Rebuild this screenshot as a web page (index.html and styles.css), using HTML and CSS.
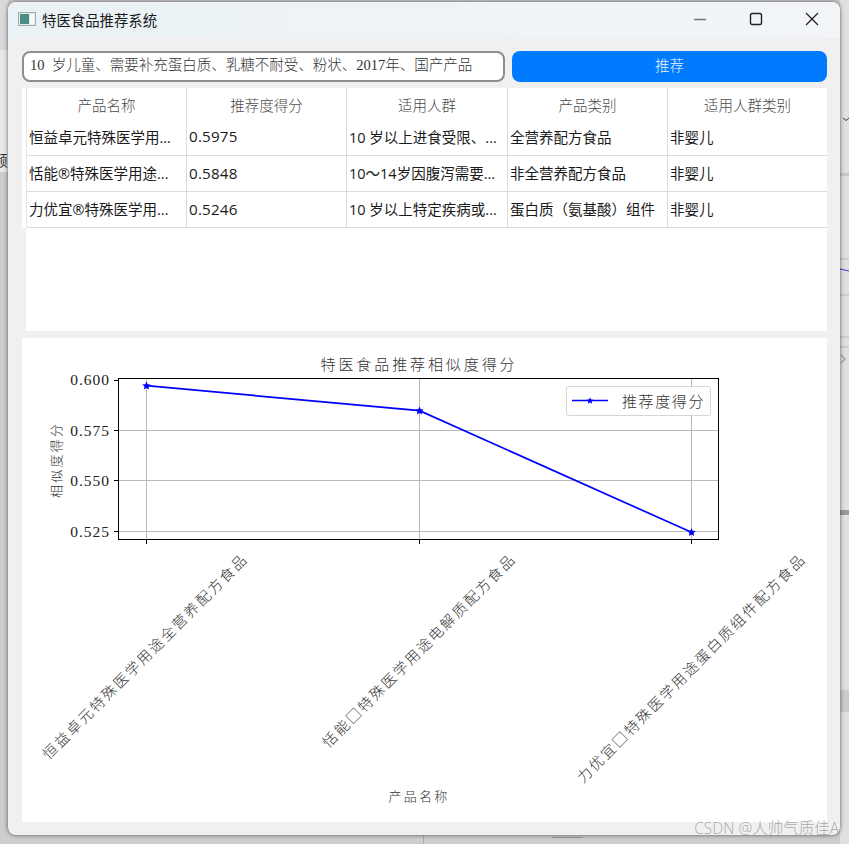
FILE: index.html
```html
<!DOCTYPE html>
<html lang="zh-CN">
<head>
  <meta charset="UTF-8" />
  <title>特医食品推荐系统</title>
  <link rel="stylesheet" href="styles.css">
</head>
<body>
  <!-- bits of the desktop showing around the window -->
  <svg class="desk-left" width="8" height="844" viewBox="0 0 8 844">
    <rect width="8" height="50" fill="#d9d9d9"/>
    <rect y="50" width="8" height="122" fill="#e8e8e8"/>
    <path d="M0 155H8" stroke="#dcdcdc"/>
  </svg>
  <div class="desk-word">频</div>
  <svg class="desk-right" width="9" height="844" viewBox="0 0 9 844">
    <path d="M3 118l3 2.5 3-2.5" fill="none" stroke="#333" stroke-width="1"/>
    <rect y="173" width="9" height="3" fill="#c8c8c8"/>
    <path d="M0 259H9M0 295H9M0 337H9M0 347H9" stroke="#b8b8b8"/>
    <path d="M0 269L9 271" stroke="#3a3ad0" stroke-width="1"/>
    <path d="M1 355l4 4-4 4" fill="none" stroke="#aaa" stroke-width="1.5"/>
    <rect y="510" width="9" height="5" fill="#999"/>
    <rect y="690" width="9" height="22" fill="#cbcbcb"/>
  </svg>
  <svg class="desk-bottom" width="849" height="9" viewBox="0 0 849 9">
    <path d="M423.5 0V9" stroke="#aaa"/>
    <path d="M552 2.5H583" stroke="#999"/>
  </svg>

  <div class="window">
    <header class="titlebar">
      <svg class="app-icon" width="18" height="14" viewBox="0 0 18 14">
        <rect x="0.5" y="0.5" width="17" height="13" fill="#e6eaea" stroke="#a2aaac"/>
        <rect x="2" y="2" width="9" height="10" fill="#468f82"/>
        <rect x="12" y="2" width="4" height="10" fill="#f8f8f8"/>
      </svg>
      <span class="title">特医食品推荐系统</span>
      <div class="win-buttons">
        <svg width="14" height="14" viewBox="0 0 14 14"><path d="M1 7.5H13" stroke="#777" stroke-width="1.4"/></svg>
        <svg width="14" height="14" viewBox="0 0 14 14"><rect x="1.5" y="1.5" width="11" height="11" rx="1.5" fill="none" stroke="#222" stroke-width="1.4"/></svg>
        <svg width="14" height="14" viewBox="0 0 14 14"><path d="M1 1L13 13M13 1L1 13" stroke="#222" stroke-width="1.3"/></svg>
      </div>
    </header>

    <div class="content">
      <div class="search-row">
        <div class="search-input">10  岁儿童、需要补充蛋白质、乳糖不耐受、粉状、2017年、国产产品</div>
        <button class="search-btn">推荐</button>
      </div>

      <div class="table-panel">
        <table class="results">
          <thead>
            <tr><th>产品名称</th><th>推荐度得分</th><th>适用人群</th><th>产品类别</th><th>适用人群类别</th></tr>
          </thead>
          <tbody>
            <tr><td>恒益卓元特殊医学用...</td><td class="num">0.5975</td><td>10 岁以上进食受限、...</td><td>全营养配方食品</td><td>非婴儿</td></tr>
            <tr><td>恬能®特殊医学用途...</td><td class="num">0.5848</td><td>10～14岁因腹泻需要...</td><td>非全营养配方食品</td><td>非婴儿</td></tr>
            <tr><td>力优宜®特殊医学用...</td><td class="num">0.5246</td><td>10 岁以上特定疾病或...</td><td>蛋白质（氨基酸）组件</td><td>非婴儿</td></tr>
          </tbody>
        </table>
      </div>

      <div class="chart-panel">
        <svg class="chart" width="805" height="484" viewBox="0 0 805 484">
          <text class="chart-title" x="397" y="32" text-anchor="middle">特医食品推荐相似度得分</text>

          <g class="grid">
            <path d="M124.5 41V201M397.5 41V201M669.5 41V201"/>
            <path d="M97 92.5H697M97 142.5H697M97 193.5H697"/>
          </g>
          <g class="ticks">
            <path d="M92 42.5H97M92 92.5H97M92 142.5H97M92 193.5H97"/>
            <path d="M124.5 202V206M397.5 202V206M669.5 202V206"/>
          </g>
          <rect class="axes" x="96.5" y="40.5" width="600" height="161"/>

          <text class="tick" x="88" y="47" text-anchor="end">0.600</text>
          <text class="tick" x="88" y="98" text-anchor="end">0.575</text>
          <text class="tick" x="88" y="148" text-anchor="end">0.550</text>
          <text class="tick" x="88" y="199" text-anchor="end">0.525</text>

          <text class="axis-label" transform="translate(39 122) rotate(-90)" text-anchor="middle">相似度得分</text>
          <text class="axis-label" x="397" y="463" text-anchor="middle">产品名称</text>

          <polyline class="line" points="124.5,47.7 397.5,72.7 669.5,194.3"/>
          <g class="marker">
            <path d="M124.5 43.5l1.2 2.7 3 .3-2.2 2 .6 2.9-2.6-1.5-2.6 1.5.6-2.9-2.2-2 3-.3z"/>
            <path d="M397.5 68.5l1.2 2.7 3 .3-2.2 2 .6 2.9-2.6-1.5-2.6 1.5.6-2.9-2.2-2 3-.3z"/>
            <path d="M669.5 190l1.2 2.7 3 .3-2.2 2 .6 2.9-2.6-1.5-2.6 1.5.6-2.9-2.2-2 3-.3z"/>
          </g>

          <rect class="legend" x="544.5" y="48.5" width="144" height="29" rx="2"/>
          <path class="line" d="M550 62.5H586"/>
          <path class="marker" d="M568 59.3l1 2.2 2.4.2-1.8 1.7.5 2.4-2.1-1.2-2.1 1.2.5-2.4-1.8-1.7 2.4-.2z"/>
          <text class="legend-text" x="600" y="69">推荐度得分</text>

          <text class="xlabel" transform="translate(227 222) rotate(-45)" text-anchor="end">恒益卓元特殊医学用途全营养配方食品</text>
          <text class="xlabel" transform="translate(495 222) rotate(-45)" text-anchor="end">恬能□特殊医学用途电解质配方食品</text>
          <text class="xlabel" transform="translate(785 222) rotate(-45)" text-anchor="end">力优宜□特殊医学用途蛋白质组件配方食品</text>
        </svg>
      </div>
    </div>
  </div>
  <div class="watermark">CSDN @人帅气质佳A</div>
</body>
</html>
```

FILE: styles.css
```css
* { margin: 0; padding: 0; box-sizing: border-box; }
html, body { height: 100%; overflow: hidden; }
body {
  background-color: #cdcdcd;
  font-family: "Open Sans", "Noto Sans CJK SC", sans-serif;
  padding: 2px 9px 9px 8px;
  position: relative;
}
.desk-left { position: absolute; left: 0; top: 0; }
.desk-right { position: absolute; right: 0; top: 0; background-color: #e0e0e0; }
.desk-bottom { position: absolute; left: 0; bottom: 0; }
.desk-word {
  position: absolute;
  left: -7px;
  top: 149px;
  width: 15px;
  overflow: hidden;
  font-size: 14.5px;
  color: #333;
}
.window {
  position: relative;
  height: 833px;
  background-color: #f0f0f0;
  border-radius: 8px;
  box-shadow: 0 0 4px rgba(0, 0, 0, 0.6);
  overflow: hidden;
}
.titlebar {
  display: flex;
  align-items: center;
  height: 36px;
  padding: 0 0 2px 10px;
  background: linear-gradient(to right, #eaf2f6, #f2f4f8);
}
.app-icon { margin-right: 6px; }
.title { font-size: 14.4px; color: #1a1a1a; }
.win-buttons {
  display: flex;
  align-items: center;
  gap: 42px;
  margin-left: auto;
  padding-right: 21px;
}
.content { padding: 13px 13px 0 14px; }
.search-row { display: flex; gap: 7px; }
.search-input {
  flex: 0 0 483px;
  height: 31px;
  line-height: 25px;
  padding-left: 6px;
  background: #fff;
  border: 2px solid #8e8e8e;
  border-radius: 8px;
  font-family: "Liberation Serif", "Noto Sans CJK SC", serif;
  font-size: 14.5px;
  font-weight: 300;
  color: #333;
  white-space: pre;
}
.search-btn {
  flex: 1;
  height: 31px;
  padding-bottom: 4px;
  background-color: #007bff;
  border: none;
  border-radius: 8px;
  color: #eef5ff;
  font-family: inherit;
  font-size: 14.5px;
  font-weight: 300;
}
.table-panel {
  height: 243px;
  margin-top: 6px;
  margin-left: 4px;
  background: #fff;
}
.results {
  table-layout: fixed;
  width: 100%;
  border-collapse: collapse;
  font-size: 14.5px;
  box-shadow: -4px 0 0 #fff;
}
.results th:nth-child(1), .results th:nth-child(2), .results th:nth-child(4) { width: 160px; }
.results th:nth-child(3) { width: 161px; }
.results th {
  height: 31px;
  padding-top: 2px;
  font-weight: 300;
  color: #4a4a4a;
  border-right: 1px solid #dcdcdc;
}
.results td {
  height: 36px;
  padding: 0 0 1px 2px;
  color: #1a1a1a;
  white-space: nowrap;
  overflow: hidden;
  border-right: 1px solid #dcdcdc;
  border-bottom: 1px solid #dcdcdc;
}
.results td.num { font-size: 15.2px; letter-spacing: 0.2px; }
.results th:first-child, .results td:first-child { border-left: 1px solid #e4e4e4; }
.results th:last-child, .results td:last-child { border-right: none; }
.chart-panel {
  height: 484px;
  margin-top: 7px;
  background: #fff;
}
.chart { display: block; }
.chart-title { font-size: 15px; font-weight: 300; letter-spacing: 2.9px; fill: #333; }
.tick { font-family: "Liberation Serif", serif; font-size: 15.5px; letter-spacing: 1px; fill: #222; }
.axis-label { font-size: 13px; font-weight: 300; letter-spacing: 2.2px; fill: #333; }
.xlabel { font-size: 14.5px; font-weight: 300; letter-spacing: 2.15px; fill: #333; }
.legend-text { font-size: 15px; font-weight: 300; letter-spacing: 1.6px; fill: #333; }
.grid path { fill: none; stroke: #b8b8b8; stroke-width: 1; }
.ticks path { fill: none; stroke: #000; stroke-width: 1; }
.axes { fill: none; stroke: #000; stroke-width: 1; }
.line { fill: none; stroke: #0000ff; stroke-width: 1.7; }
.marker { fill: #0000ff; }
.legend { fill: #fff; fill-opacity: 0.92; stroke: #d6d6d6; stroke-width: 1; }
.watermark {
  position: absolute;
  right: 10px;
  top: 816px;
  font-size: 15.5px;
  font-weight: 300;
  color: rgba(150, 150, 150, 0.8);
  white-space: nowrap;
}
```
